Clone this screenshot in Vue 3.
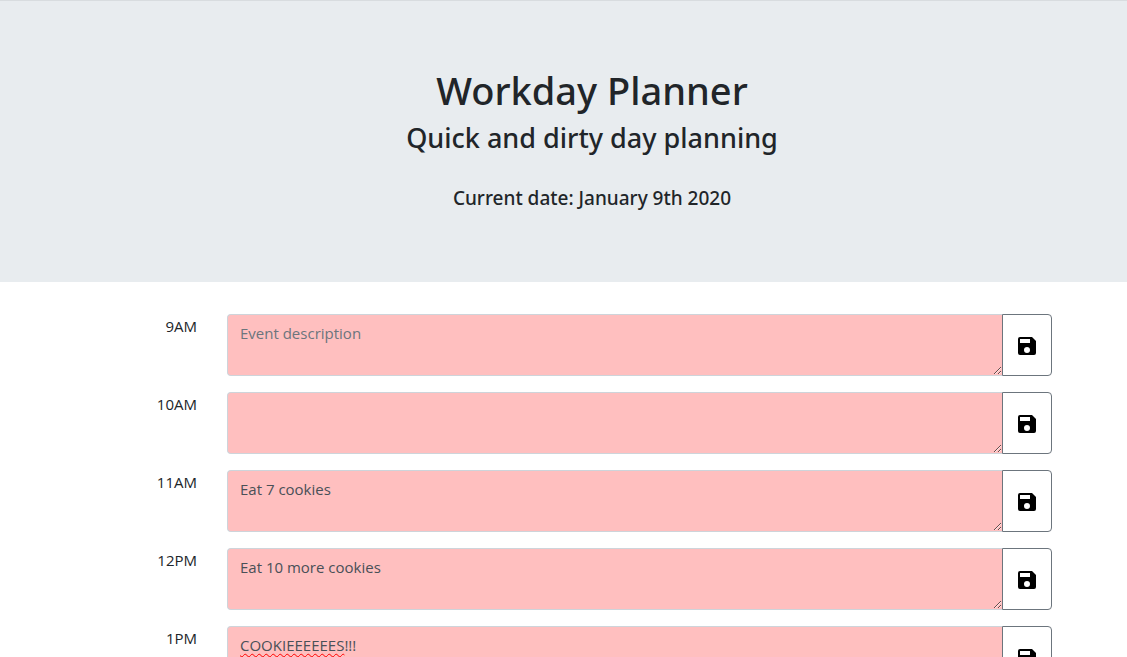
<script setup>
import { reactive } from 'vue'

const slots = reactive([
  { hour: '9AM', text: '', hint: 'Event description' },
  { hour: '10AM', text: '', hint: '' },
  { hour: '11AM', text: 'Eat 7 cookies', hint: '' },
  { hour: '12PM', text: 'Eat 10 more cookies', hint: '' },
  { hour: '1PM', text: 'COOKIEEEEEES!!!', hint: '', misspelled: 'COOKIEEEEEES' }
])
</script>

<template>
  <div class="page">
    <header class="hero">
      <h1>Workday Planner</h1>
      <h2>Quick and dirty day planning</h2>
      <p class="date">Current date: January 9th 2020</p>
    </header>
    <main class="planner">
      <div v-for="slot in slots" :key="slot.hour" class="slot">
        <label class="hour" :for="'slot-' + slot.hour">{{ slot.hour }}</label>
        <div class="entry">
          <div class="field">
            <textarea :id="'slot-' + slot.hour" v-model="slot.text" class="event" :placeholder="slot.hint" rows="2" spellcheck="false"></textarea>
            <span v-if="slot.misspelled && slot.text.startsWith(slot.misspelled)" class="spelling" aria-hidden="true">{{ slot.misspelled }}</span>
          </div>
          <button type="button" class="save" :aria-label="'Save ' + slot.hour">
            <svg viewBox="0 0 24 24" width="24" height="24" aria-hidden="true">
              <path d="M17 3H5a2 2 0 0 0-2 2v14a2 2 0 0 0 2 2h14a2 2 0 0 0 2-2V7l-4-4zm-5 16a3 3 0 1 1 0-6 3 3 0 0 1 0 6zm3-10H5V5h10v4z" />
            </svg>
          </button>
        </div>
      </div>
    </main>
  </div>
</template>

<style>
body {
  margin: 0;
  background: #fff;
}
</style>

<style scoped>
.page {
  height: 100vh;
  overflow: hidden;
  font-family: "Segoe UI", "Open Sans", "Noto Sans", sans-serif;
  font-size: 15px;
  line-height: 24px;
  color: #212529;
}
.hero {
  box-sizing: border-box;
  padding: 65px 0 70px 57px;
  border-top: 1px solid #d8dcdf;
  background: #e8ecef;
  text-align: center;
}
h1,
h2,
.date {
  margin: 0;
  font-family: "Segoe UI", "Noto Sans", "Open Sans", sans-serif;
  font-weight: 500;
}
h1 {
  font-size: 38px;
  line-height: 48px;
}
h2 {
  margin-top: 8px;
  font-size: 27px;
  line-height: 32px;
}
.date {
  margin-top: 30px;
  font-size: 19px;
  line-height: 28px;
}
.planner {
  display: flex;
  flex-direction: column;
  gap: 16px;
  padding: 32px 75px 0 132px;
}
.slot {
  display: flex;
  gap: 30px;
}
.hour {
  width: 65px;
  flex: none;
  text-align: right;
}
.entry {
  display: flex;
  flex: 1;
  height: 62px;
}
.field {
  position: relative;
  display: flex;
  flex: 1;
}
.event {
  box-sizing: border-box;
  width: 100%;
  margin: 0;
  padding: 6px 12px;
  border: 1px solid #ced4da;
  border-right: 0;
  border-radius: 4px 0 0 4px;
  outline: 0;
  background: #ffbfbf;
  color: #495057;
  font: inherit;
  resize: vertical;
}
.event::placeholder {
  color: #6c757d;
  opacity: 1;
}
.spelling {
  position: absolute;
  top: 7px;
  left: 13px;
  color: transparent;
  text-decoration: underline wavy #f00 1px;
  text-underline-offset: 2px;
  pointer-events: none;
}
.save {
  box-sizing: border-box;
  display: flex;
  align-items: center;
  justify-content: center;
  width: 50px;
  padding: 2px 0 0;
  border: 1px solid #6c757d;
  border-radius: 0 4px 4px 0;
  background: #fff;
  color: #000;
}
.save svg {
  fill: currentColor;
}
</style>
